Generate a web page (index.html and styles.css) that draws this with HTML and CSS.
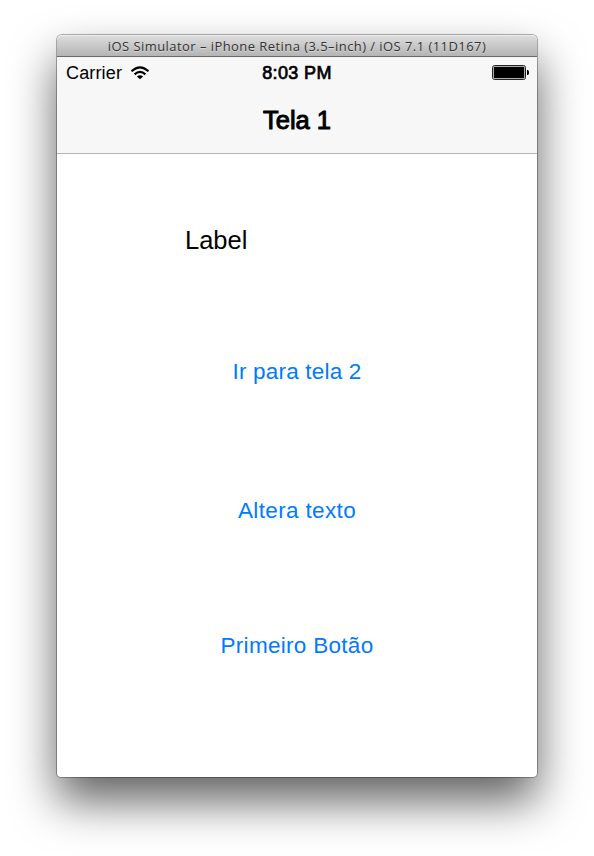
FILE: index.html
```html
<!DOCTYPE html>
<html lang="pt">
<head>
<meta charset="utf-8">
<title>Tela 1</title>
<link rel="stylesheet" href="styles.css">
</head>
<body>
<main class="window">
  <header class="titlebar"><span class="window-title">iOS Simulator – iPhone Retina (3.5–inch) / iOS 7.1 (11D167)</span></header>
  <div class="screen">
    <div class="top">
      <div class="status">
        <div class="carrier"><span class="carrier-name">Carrier</span>
          <svg class="wifi" width="20" height="14" viewBox="0 0 20 14" fill="none" stroke="#000" stroke-width="2.2">
            <path d="M1.500 5.200Q10-2.600 18.500 5.200M4.600 8.400Q10 3.500 15.400 8.400"/>
            <path d="M10 13.300L6.900 10.400Q10 7.900 13.100 10.400Z" fill="#000" stroke="none"/>
          </svg>
        </div>
        <span class="clock">8:03 PM</span>
        <svg class="battery" width="38" height="16" viewBox="0 0 38 16">
          <rect x=".5" y=".5" width="33" height="14" rx="2" fill="none" stroke="#222"/>
          <rect x="1.500" y="1.500" width="31" height="12" rx="1" fill="#000" stroke="#bbb" stroke-width=".8"/>
          <path d="M35 5h1q1 .5 1 2.500t-1 2.500h-1z" fill="#000"/>
        </svg>
      </div>
      <h1 class="nav"><span class="nav-title">Tela 1</span></h1>
    </div>
    <div class="content">
      <p class="label">Label</p>
      <button class="action go">Ir para tela 2</button>
      <button class="action change">Altera texto</button>
      <button class="action first">Primeiro Botão</button>
    </div>
  </div>
</main>
</body>
</html>
```

FILE: styles.css
```css
* { box-sizing: border-box; }
body {
  margin: 0;
  height: 856px;
  padding: 35px 57px 0;
  overflow: hidden;
  background: #fff;
  color: #000;
  font-family: "Liberation Sans", Arial, sans-serif;
}
.window {
  width: 480px;
  height: 742px;
  border-radius: 5px 5px 4px 4px;
  background: #fff;
  box-shadow: 0 0 0 1px rgba(0, 0, 0, .3), 0 24px 46px rgba(0, 0, 0, .62);
}
.titlebar {
  height: 22px;
  display: flex;
  justify-content: center;
  border-top: 1px solid #eee;
  border-bottom: 1px solid #6a6a6a;
  border-radius: 5px 5px 0 0;
  background: linear-gradient(#dcdcdc, #b4b4b4);
}
.window-title {
  font: 13px/21px "Open Sans", sans-serif;
  letter-spacing: .44px;
  color: #333;
  white-space: nowrap;
  text-shadow: 0 1px 0 rgba(255, 255, 255, .4);
}
.screen { height: 720px; }
.top {
  height: 97px;
  background: #f7f7f7;
  border-bottom: 1px solid #b2b2b2;
}
.status {
  height: 31px;
  padding: 0 7px 0 9px;
  display: grid;
  grid-template-columns: 1fr auto 1fr;
  align-items: center;
  font-size: 18px;
}
.carrier { display: flex; align-items: center; gap: 8px; }
.carrier-name { line-height: 31px; padding-top: 1px; letter-spacing: .15px; }
.wifi { margin-bottom: 1px; }
.clock {
  line-height: 31px;
  padding-top: 1px;
  letter-spacing: .35px;
  margin-right: 2px;
  -webkit-text-stroke: .7px #000;
}
.battery { justify-self: end; }
.nav {
  height: 65px;
  margin: 0;
  text-align: center;
  font-size: 25.500px;
  font-weight: normal;
  line-height: 65px;
  -webkit-text-stroke: 1px #000;
}
.content { display: flex; flex-direction: column; align-items: center; }
.label {
  align-self: flex-start;
  margin: 70px 0 0 128px;
  font-size: 25.500px;
  line-height: 32px;
}
.action {
  padding: 0;
  border: 0;
  background: none;
  color: #007aff;
  font: 22.500px/30px "Liberation Sans", Arial, sans-serif;
  letter-spacing: .2px;
}
.go { margin-top: 101px; }
.change { margin-top: 109px; letter-spacing: .35px; }
.first { margin-top: 105px; letter-spacing: .3px; }
```
